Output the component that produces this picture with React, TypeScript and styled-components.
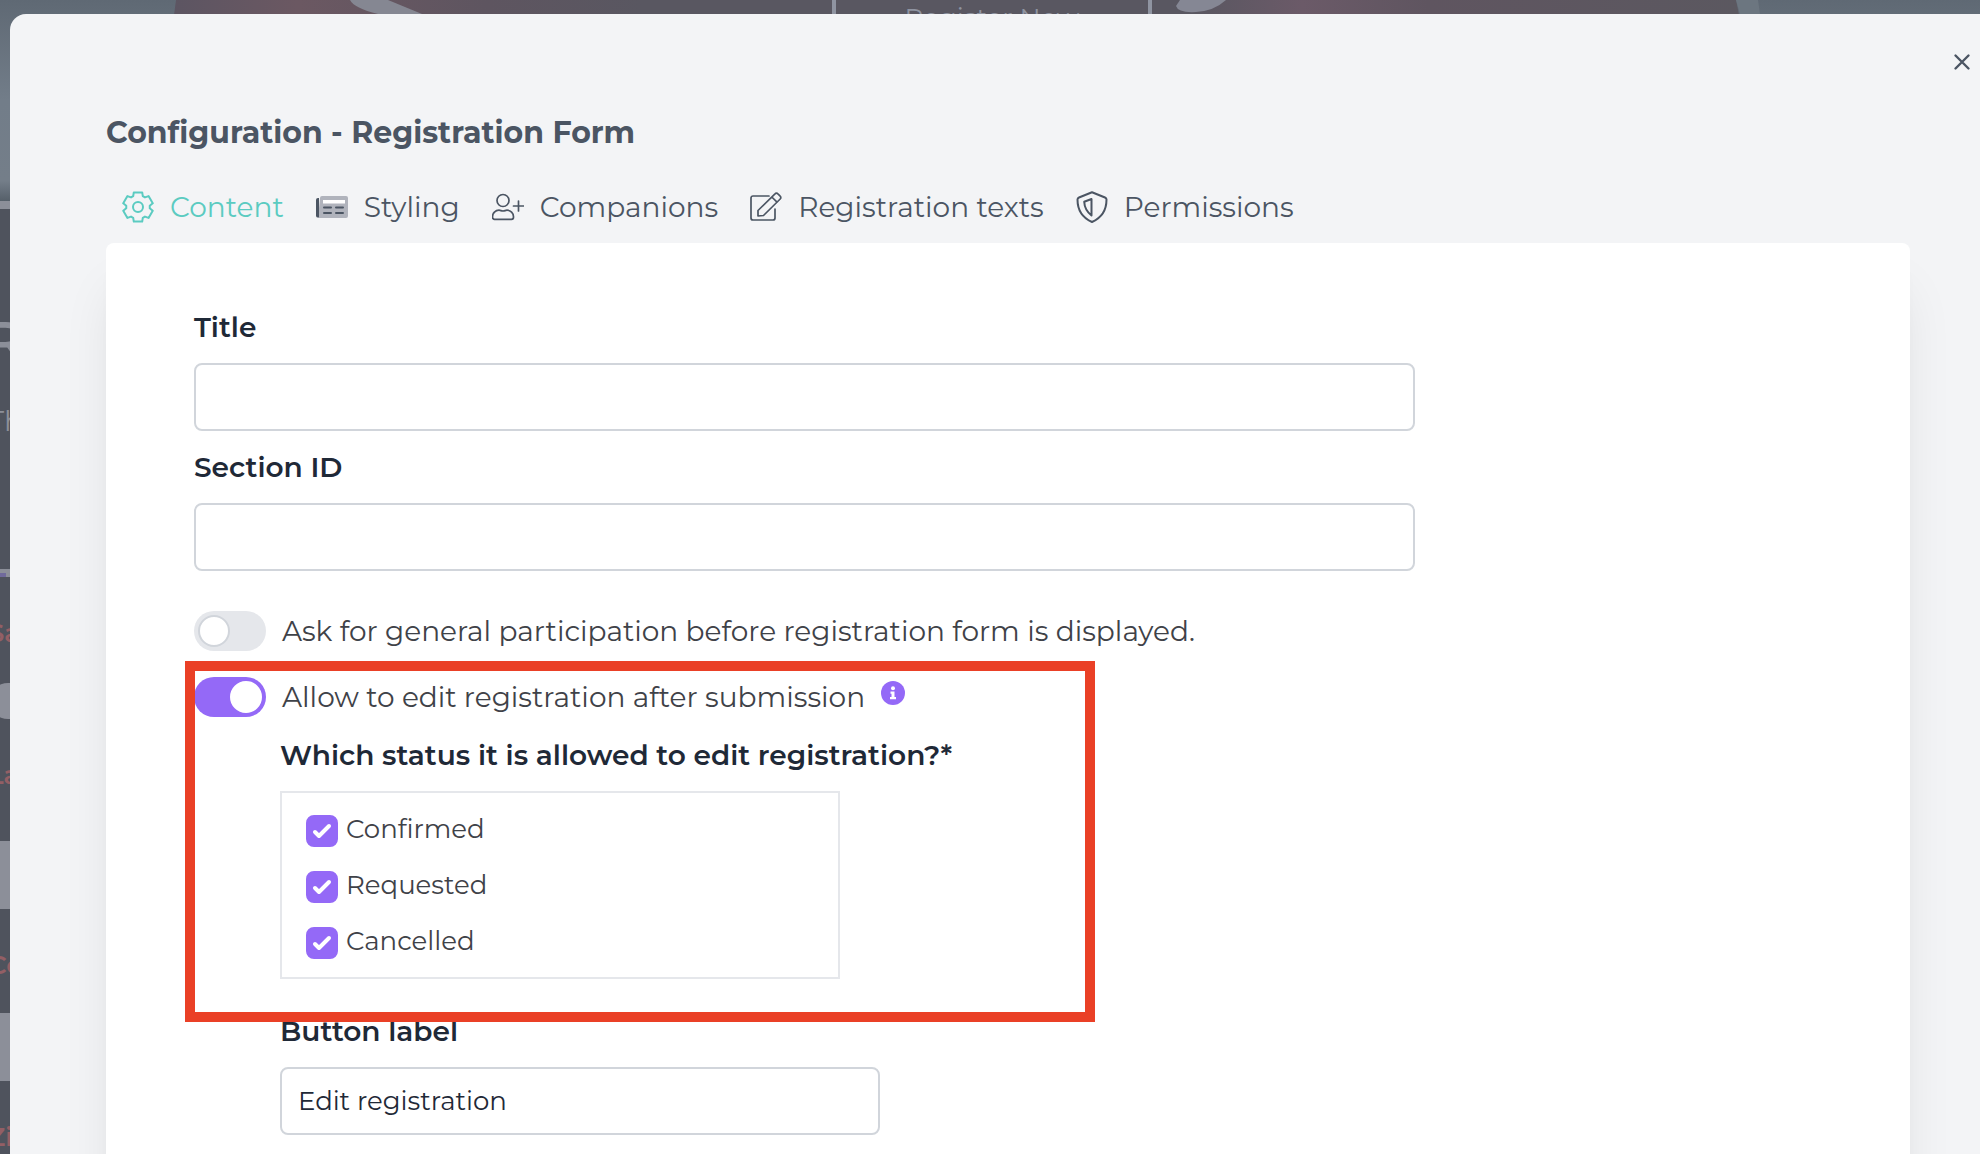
import React, { useState } from "react";
import styled, { createGlobalStyle } from "styled-components";

const GlobalStyle = createGlobalStyle`
  *, *::before, *::after { box-sizing: border-box; }
  body {
    margin: 0;
    overflow: hidden;
    background: #4f535d;
    font-family: Montserrat, Inter, "Open Sans", sans-serif;
  }
  input, button { font: inherit; }
  h1, h2, p { margin: 0; }
`;

const Screen = styled.div`
  position: relative;
  height: 100vh;
  overflow: hidden;
`;

/* ---------- page behind the dialog ---------- */

const Backdrop = styled.div`
  height: 100%;
  overflow: hidden;
  background: #4f535d;
`;

const Hero = styled.div`
  display: grid;
  height: 201px;
  overflow: hidden;
  > * { grid-area: 1 / 1; }
`;

const Photo = styled.svg`
  width: 100%;
  height: 201px;
`;

const HeroButton = styled.button`
  justify-self: center;
  width: 320px;
  height: 74px;
  margin-top: -28px;
  margin-left: 4px;
  padding: 28px 0 10px;
  border: 4px solid #8f94a1;
  background: transparent;
  color: #8f94a1;
  font-size: 26px;
  font-weight: 400;
  line-height: 28px;
`;

const Divider = styled.div<{ $accent?: boolean }>`
  height: 8px;
  background: #8c8f99;
  &::after {
    content: "";
    display: ${(p) => (p.$accent ? "block" : "none")};
    width: 6px;
    height: 8px;
    border-top: 4px solid #8c8f99;
    background: #706a9c;
  }
`;

const PageTitle = styled.h2`
  height: 96px;
  margin-top: 100px;
  margin-left: -14px;
  color: #8c8f99;
  font-size: 52px;
  font-weight: 600;
  line-height: 62px;
`;

const PageText = styled.p`
  height: 164px;
  margin-left: -12px;
  color: #8c8f99;
  font-size: 28px;
  font-weight: 400;
  line-height: 32px;
`;

const FieldName = styled.p<{ $height: number }>`
  height: ${(p) => p.$height}px;
  padding-top: 40px;
  margin-left: -12px;
  color: #935f65;
  font-size: 26px;
  font-weight: 600;
  line-height: 32px;
`;

const PageBlock = styled.div<{ $round?: boolean }>`
  width: 300px;
  height: ${(p) => (p.$round ? 36 : 68)}px;
  margin-left: ${(p) => (p.$round ? -10 : 0)}px;
  border-radius: ${(p) => (p.$round ? 18 : 0)}px;
  background: #8c8f99;
`;

/* ---------- dialog ---------- */

const Dialog = styled.section`
  position: absolute;
  inset: 14px 0 0 10px;
  overflow: hidden;
  border-top-left-radius: 16px;
  background: #f3f4f6;
`;

const DialogTop = styled.div`
  display: flex;
  justify-content: flex-end;
  padding: 35px 5px 0;
`;

const CloseButton = styled.button`
  display: grid;
  place-items: center;
  width: 26px;
  height: 26px;
  padding: 0;
  border: 0;
  background: none;
  color: #4b5563;
  cursor: pointer;
`;

const DialogBody = styled.div`
  padding: 38px 70px 0 96px;
`;

const Heading = styled.h1`
  color: #4b5563;
  font-size: 30px;
  font-weight: 700;
  line-height: 40px;
`;

const Tabs = styled.nav`
  display: flex;
  gap: 32px;
  margin: 36px 0 18px;
  padding-left: 16px;
`;

const Tab = styled.button<{ $active: boolean }>`
  display: flex;
  align-items: center;
  gap: 16px;
  padding: 0;
  border: 0;
  background: none;
  color: ${(p) => (p.$active ? "#5bcbc1" : "#4b5563")};
  font-size: 28px;
  font-weight: 400;
  line-height: 36px;
  white-space: nowrap;
  cursor: pointer;
`;

const Icon = styled.svg<{ $stroke?: number }>`
  flex: none;
  width: 32px;
  height: 32px;
  fill: none;
  stroke: currentColor;
  stroke-width: ${(p) => p.$stroke ?? 2};
  stroke-linejoin: round;
  stroke-linecap: round;
`;

const Card = styled.form`
  min-height: 1200px;
  padding: 66px 88px;
  border-radius: 8px;
  background: #fff;
  box-shadow: 0 40px 50px -10px rgba(0, 0, 0, 0.1), 0 16px 20px -10px rgba(0, 0, 0, 0.04);
`;

const Field = styled.div`
  display: flex;
  flex-direction: column;
  gap: 18px;
  margin-bottom: 18px;
`;

const Label = styled.label`
  color: #1f2937;
  font-size: 28px;
  font-weight: 600;
  line-height: 36px;
`;

const TextInput = styled.input<{ $width: string }>`
  width: ${(p) => p.$width};
  height: 68px;
  padding: 0 16px;
  border: 2px solid #d1d5db;
  border-radius: 8px;
  background: #fff;
  color: #1f2937;
  font-size: 26px;
  font-weight: 400;
  outline: none;
`;

const Switches = styled.div`
  display: flex;
  flex-direction: column;
  gap: 26px;
  padding-top: 22px;
`;

const SwitchRow = styled.div`
  display: flex;
  align-items: center;
  gap: 16px;
  height: 40px;
`;

const Switch = styled.input`
  appearance: none;
  flex: none;
  width: 72px;
  height: 40px;
  margin: 0;
  padding: 4px;
  border-radius: 20px;
  background: #e5e7eb;
  cursor: pointer;
  &::before {
    content: "";
    display: block;
    width: 32px;
    height: 32px;
    border: 2px solid #d1d5db;
    border-radius: 50%;
    background: #fff;
  }
  &:checked { background: #9469f7; }
  &:checked::before {
    margin-left: 32px;
    border-color: #fff;
  }
`;

const SwitchLabel = styled.label`
  color: #3f4248;
  font-size: 28px;
  font-weight: 400;
  line-height: 36px;
`;

const InfoButton = styled.button`
  align-self: flex-start;
  display: block;
  width: 24px;
  height: 24px;
  margin-top: 4px;
  padding: 0;
  border: 0;
  background: none;
`;

const Highlighted = styled.div`
  position: relative;
`;

const HighlightFrame = styled.div`
  position: absolute;
  inset: -16px auto -43px -9px;
  width: 910px;
  border: 10px solid #ea4026;
  pointer-events: none;
`;

const Nested = styled.div`
  padding-left: 86px;
`;

const StatusGroup = styled.fieldset`
  margin: 20px 0 0;
  padding: 0;
  border: 0;
`;

const Legend = styled.legend`
  margin-bottom: 18px;
  padding: 0;
  color: #1f2937;
  font-size: 28px;
  font-weight: 600;
  line-height: 36px;
`;

const StatusList = styled.div`
  display: flex;
  flex-direction: column;
  gap: 24px;
  width: 560px;
  padding: 22px 24px 18px;
  border: 2px solid #e5e7eb;
`;

const CheckLabel = styled.label`
  display: flex;
  align-items: flex-start;
  gap: 8px;
  height: 32px;
  color: #3f4248;
  font-size: 26px;
  font-weight: 400;
  line-height: 28px;
`;

const CheckCell = styled.span`
  display: grid;
  width: 32px;
  height: 32px;
  > * { grid-area: 1 / 1; }
`;

const CheckInput = styled.input`
  appearance: none;
  width: 32px;
  height: 32px;
  margin: 0;
  border: 2px solid #d1d5db;
  border-radius: 8px;
  &:checked {
    border-color: #9469f7;
    background: #9469f7;
  }
`;

const CheckMark = styled.svg`
  width: 32px;
  height: 32px;
  pointer-events: none;
`;

const ButtonField = styled(Field)`
  margin-top: 34px;
`;

/* ---------- icons ---------- */

const gearPath = (() => {
  const tooth = [[-4.8, -10.8], [-4.2, -14.6], [4.2, -14.6], [4.8, -10.8]];
  const points: string[] = [];
  for (let i = 0; i < 6; i++) {
    const a = (i * Math.PI) / 3;
    tooth.forEach(([x, y]) => {
      const px = 16 + x * Math.cos(a) - y * Math.sin(a);
      const py = 16 + x * Math.sin(a) + y * Math.cos(a);
      points.push(`${px.toFixed(2)} ${py.toFixed(2)}`);
    });
  }
  return `M${points.join("L")}Z`;
})();

const GearIcon = () => (
  <Icon viewBox="0 0 32 32">
    <path d={gearPath} />
    <circle cx="16" cy="16" r="5" />
  </Icon>
);

const NewspaperIcon = () => (
  <Icon viewBox="0 0 32 32">
    <path d="M4 7a2 2 0 0 1 2-2h24a2 2 0 0 1 2 2v18a2 2 0 0 1-2 2H2z" fill="#b0b3bc" stroke="none" />
    <path d="M3 7H2a2 2 0 0 0-2 2v16a2 2 0 0 0 3 1z" fill="#4b5563" stroke="none" />
    <path d="M7 9h22v3.500H7z" fill="#fff" stroke="none" />
    <path d="M8 16.500h7M20 16.500h7M8 22h7M20 22h7" />
  </Icon>
);

const UserPlusIcon = () => (
  <Icon viewBox="0 0 32 32" $stroke={1.7}>
    <circle cx="11" cy="9.500" r="6" />
    <path d="M7 19.200c1.600 0 2.200.8 4 .8s2.400-.8 4-.8a6.500 6.500 0 0 1 6.500 6.500v.6a2 2 0 0 1-2 2h-17a2 2 0 0 1-2-2v-.6A6.500 6.500 0 0 1 7 19.200z" />
    <path d="M26.500 10v10M21.500 15h10" />
  </Icon>
);

const EditIcon = () => (
  <Icon viewBox="0 0 32 32" $stroke={1.7}>
    <path d="M19 5H3a2 2 0 0 0-2 2v20a2 2 0 0 0 2 2h20a2 2 0 0 0 2-2V18" />
    <path d="M8 25v-5.500L25 2.800a2 2 0 0 1 2.900 0l2.300 2.300a2 2 0 0 1 0 2.900L13.500 24.500z M21.800 6l5.200 5.200" />
  </Icon>
);

const ShieldIcon = () => (
  <Icon viewBox="0 0 32 32">
    <path d="M16 1.200L29 6.500c1 .4 1.500 1 1.500 2C30.500 19 25 27 16 31 7 27 1.500 19 1.500 8.500c0-1 .5-1.600 1.500-2z" />
    <path d="M15.500 8v16.500C11 21 8.500 16.500 8.200 10.800z" />
  </Icon>
);

const tabs = [
  { name: "Content", icon: <GearIcon /> },
  { name: "Styling", icon: <NewspaperIcon /> },
  { name: "Companions", icon: <UserPlusIcon /> },
  { name: "Registration texts", icon: <EditIcon /> },
  { name: "Permissions", icon: <ShieldIcon /> },
];

const statuses = ["Confirmed", "Requested", "Cancelled"];

function BackgroundPage() {
  return (
    <Backdrop aria-hidden="true">
      <Hero>
        <Photo viewBox="0 0 1980 201" preserveAspectRatio="none">
          <defs>
            <linearGradient id="wall" x1="0" y1="0" x2="0" y2="1">
              <stop offset="0" stopColor="#5f6974" />
              <stop offset=".5" stopColor="#727d89" />
              <stop offset=".9" stopColor="#747e89" />
              <stop offset="1" stopColor="#56606a" />
            </linearGradient>
            <linearGradient id="car" x1="0" y1="0" x2="1" y2="0">
              <stop offset="0" stopColor="#5c5562" />
              <stop offset=".08" stopColor="#6b5862" />
              <stop offset=".2" stopColor="#5e5560" />
              <stop offset=".3" stopColor="#595761" />
              <stop offset=".65" stopColor="#595761" />
              <stop offset=".72" stopColor="#6b5a68" />
              <stop offset=".8" stopColor="#5f5560" />
              <stop offset="1" stopColor="#5b5860" />
            </linearGradient>
          </defs>
          <path d="M0 0h1980v201H0z" fill="url(#wall)" />
          <path d="M176 0h1560l6 30H172z" fill="url(#car)" />
          <path d="M350 0h38l34 14h-44q-24-6-28-14z" fill="#858792" />
          <path d="M1180 0h46q-12 11-30 12t-20-6z" fill="#858794" />
          <path d="M1736 0h22l2 14h-20z" fill="#6c7680" />
        </Photo>
        <HeroButton type="button" tabIndex={-1}>Register Now</HeroButton>
      </Hero>
      <Divider />
      <PageTitle>R</PageTitle>
      <PageText>Th</PageText>
      <Divider $accent />
      <FieldName $height={106}>Sa</FieldName>
      <PageBlock $round />
      <FieldName $height={122}>La</FieldName>
      <PageBlock />
      <FieldName $height={104}>Co</FieldName>
      <PageBlock />
      <FieldName $height={100}>Zi</FieldName>
    </Backdrop>
  );
}

export default function App() {
  const [active, setActive] = useState("Content");
  return (
    <>
      <GlobalStyle />
      <Screen>
        <BackgroundPage />
        <Dialog role="dialog" aria-labelledby="dialog-title">
          <DialogTop>
            <CloseButton type="button" aria-label="Close">
              <svg width="18" height="18" viewBox="0 0 18 18" fill="none" stroke="currentColor" strokeWidth="2.4" strokeLinecap="round">
                <path d="M2.500 2.500l13 13M15.500 2.500l-13 13" />
              </svg>
            </CloseButton>
          </DialogTop>
          <DialogBody>
            <Heading id="dialog-title">Configuration - Registration Form</Heading>
            <Tabs>
              {tabs.map((tab) => (
                <Tab key={tab.name} type="button" $active={tab.name === active} onClick={() => setActive(tab.name)}>
                  {tab.icon}
                  {tab.name}
                </Tab>
              ))}
            </Tabs>
            <Card>
              <Field>
                <Label htmlFor="title">Title</Label>
                <TextInput id="title" type="text" $width="75%" />
              </Field>
              <Field>
                <Label htmlFor="section-id">Section ID</Label>
                <TextInput id="section-id" type="text" $width="75%" />
              </Field>
              <Switches>
                <SwitchRow>
                  <Switch id="ask" type="checkbox" role="switch" />
                  <SwitchLabel htmlFor="ask">
                    Ask for general participation before registration form is displayed.
                  </SwitchLabel>
                </SwitchRow>
                <Highlighted>
                  <SwitchRow>
                    <Switch id="allow" type="checkbox" role="switch" defaultChecked />
                    <SwitchLabel htmlFor="allow">Allow to edit registration after submission</SwitchLabel>
                    <InfoButton type="button" aria-label="More information">
                      <svg width="24" height="24" viewBox="0 0 24 24">
                        <circle cx="12" cy="12" r="12" fill="#9469f7" />
                        <circle cx="12" cy="7.200" r="2" fill="#fff" />
                        <path d="M9.500 10.500h4v5.500h1.500v2.200H9V16h1.500v-3.300h-1z" fill="#fff" />
                      </svg>
                    </InfoButton>
                  </SwitchRow>
                  <Nested>
                    <StatusGroup>
                      <Legend>Which status it is allowed to edit registration?*</Legend>
                      <StatusList>
                        {statuses.map((status) => (
                          <CheckLabel key={status}>
                            <CheckCell>
                              <CheckInput type="checkbox" defaultChecked />
                              <CheckMark viewBox="0 0 32 32" fill="none" stroke="#fff" strokeWidth="4" strokeLinecap="round" strokeLinejoin="round">
                                <path d="M9 17l4 4L23 11" />
                              </CheckMark>
                            </CheckCell>
                            {status}
                          </CheckLabel>
                        ))}
                      </StatusList>
                    </StatusGroup>
                  </Nested>
                  <HighlightFrame />
                </Highlighted>
              </Switches>
              <Nested>
                <ButtonField>
                  <Label htmlFor="button-label">Button label</Label>
                  <TextInput id="button-label" type="text" defaultValue="Edit registration" $width="600px" />
                </ButtonField>
              </Nested>
            </Card>
          </DialogBody>
        </Dialog>
      </Screen>
    </>
  );
}
